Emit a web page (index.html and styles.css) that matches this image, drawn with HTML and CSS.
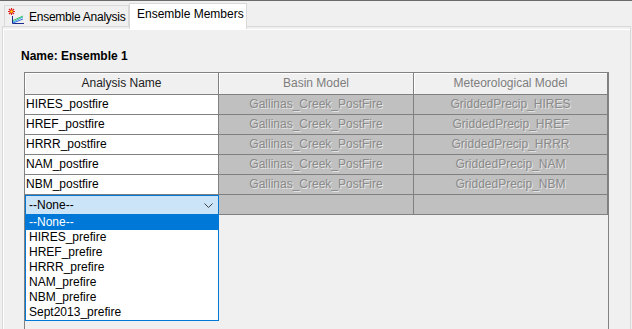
FILE: index.html
```html
<!DOCTYPE html>
<html lang="en">
<head>
    <meta charset="UTF-8">
    <title>Ensemble Members</title>
    <link rel="stylesheet" href="styles.css">
</head>
<body>
    <div class="top-line"></div>

    <div class="tab-strip">
        <div class="tab">
            <svg class="tab-icon" width="16" height="16" viewBox="0 0 16 16">
                <path d="M1 1 L6 6 M6 1 L1 6 M3.5 0 L3.5 7 M0 3.5 L7 3.5" stroke="#e0201c" stroke-width="1.2"/>
                <circle cx="3.5" cy="3.5" r="1.2" fill="#ffd800"/>
                <path d="M4.5 8 V15.5 H16" stroke="#1a2a8c" stroke-width="1" fill="none"/>
                <path d="M5 14 L15 9" stroke="#28b4d8" stroke-width="1" fill="none"/>
                <path d="M5 12.5 L15 8" stroke="#3fbf5a" stroke-width="1" fill="none"/>
                <path d="M5 15 L15 11" stroke="#3c6ee0" stroke-width="1" fill="none"/>
            </svg>
            <span>Ensemble Analysis</span>
        </div>
        <div class="tab active">Ensemble Members</div>
    </div>

    <div class="panel">
        <div class="panel-inner">
            <div class="ensemble-name">Name: Ensemble 1</div>

            <div class="table-pane">
                <div class="member-grid">
                    <div class="head-cell">Analysis Name</div>
                    <div class="head-cell disabled">Basin Model</div>
                    <div class="head-cell disabled">Meteorological Model</div>

                    <div class="cell">HIRES_postfire</div>
                    <div class="cell locked">Gallinas_Creek_PostFire</div>
                    <div class="cell locked">GriddedPrecip_HIRES</div>

                    <div class="cell">HREF_postfire</div>
                    <div class="cell locked">Gallinas_Creek_PostFire</div>
                    <div class="cell locked">GriddedPrecip_HREF</div>

                    <div class="cell">HRRR_postfire</div>
                    <div class="cell locked">Gallinas_Creek_PostFire</div>
                    <div class="cell locked">GriddedPrecip_HRRR</div>

                    <div class="cell">NAM_postfire</div>
                    <div class="cell locked">Gallinas_Creek_PostFire</div>
                    <div class="cell locked">GriddedPrecip_NAM</div>

                    <div class="cell">NBM_postfire</div>
                    <div class="cell locked">Gallinas_Creek_PostFire</div>
                    <div class="cell locked">GriddedPrecip_NBM</div>

                    <div class="cell combo">
                        <span>--None--</span>
                        <svg class="chevron" width="9" height="5" viewBox="0 0 9 5">
                            <path d="M0.5 0.5 L4.5 4.5 L8.5 0.5" stroke="#404040" stroke-width="1" fill="none"/>
                        </svg>
                    </div>
                    <div class="cell locked"></div>
                    <div class="cell locked"></div>
                </div>

                <ul class="combo-list">
                    <li class="selected">--None--</li>
                    <li>HIRES_prefire</li>
                    <li>HREF_prefire</li>
                    <li>HRRR_prefire</li>
                    <li>NAM_prefire</li>
                    <li>NBM_prefire</li>
                    <li>Sept2013_prefire</li>
                </ul>
            </div>
        </div>
    </div>
</body>
</html>
```

FILE: styles.css
```css
body {
    font-family: "Liberation Sans", Arial, sans-serif;
    font-size: 12px;
    background-color: #f0f0f0;
    color: #000;
    margin: 0;
    width: 632px;
    height: 329px;
    overflow: hidden;
}

.top-line {
    height: 1px;
    background-color: #6a6a6a;
}

.tab-strip {
    display: flex;
    align-items: flex-end;
    height: 25px;
    padding-left: 4px;
    position: relative;
    z-index: 2;
}

.tab {
    box-sizing: border-box;
    width: 125px;
    height: 21px;
    border: 1px solid #d9d9d9;
    border-bottom: none;
    display: flex;
    align-items: flex-start;
    padding: 4px 0 0 3px;
    line-height: 15px;
    letter-spacing: -0.25px;
    white-space: nowrap;
}

.tab-icon {
    margin: -2px 5px 0 0;
    flex-shrink: 0;
}

.tab.active {
    width: 118px;
    height: 26px;
    margin-bottom: -3px;
    background-color: #fff;
    padding: 3px 0 0 7px;
    letter-spacing: 0;
}

.panel {
    box-sizing: border-box;
    margin-left: 2px;
    width: 629px;
    height: 303px;
    border: 1px solid #d9d9d9;
    border-bottom: none;
    padding-top: 2px;
}

.panel-inner {
    box-sizing: border-box;
    border-top: 1px solid #fff;
    border-left: 1px solid #fff;
    height: 100%;
}

.ensemble-name {
    font-weight: bold;
    line-height: 15px;
    padding: 19px 0 0 17px;
}

.table-pane {
    position: relative;
    width: 583px;
    height: 256px;
    margin: 8px 0 0 20px;
    border: 1px solid #828282;
    border-bottom: none;
}

.member-grid {
    display: grid;
    grid-template-columns: 194px 195px 194px;
}

.head-cell,
.cell {
    box-sizing: border-box;
    border-right: 1px solid #808080;
    border-bottom: 1px solid #808080;
    white-space: nowrap;
    overflow: hidden;
}

.head-cell {
    height: 22px;
    line-height: 20px;
    text-align: center;
    color: #222;
    background-color: #f0f0f0;
    box-shadow: inset 1px 1px 0 #fff;
}

.head-cell.disabled {
    color: #7d7d7d;
}

.cell {
    height: 20px;
    line-height: 19px;
    padding-left: 1px;
    background-color: #fff;
}

.cell.locked {
    background-color: #c0c0c0;
    color: #8a8a8a;
    text-shadow: 1px 1px 0 #e6e6e6;
    text-align: center;
    padding-left: 0;
}

.cell.combo {
    border: 1px solid #0078d7;
    background-color: #cce4f7;
    display: flex;
    align-items: center;
    justify-content: space-between;
    padding: 0 5px 0 3px;
    line-height: 17px;
}

.chevron {
    flex-shrink: 0;
}

.combo-list {
    position: absolute;
    left: 0;
    top: 141px;
    box-sizing: border-box;
    width: 194px;
    margin: 0;
    padding: 0;
    list-style: none;
    background-color: #fff;
    border: 1px solid #0078d7;
}

.combo-list li {
    height: 15px;
    line-height: 15px;
    padding-left: 3px;
}

.combo-list li.selected {
    background-color: #0078d7;
    color: #fff;
}
```
